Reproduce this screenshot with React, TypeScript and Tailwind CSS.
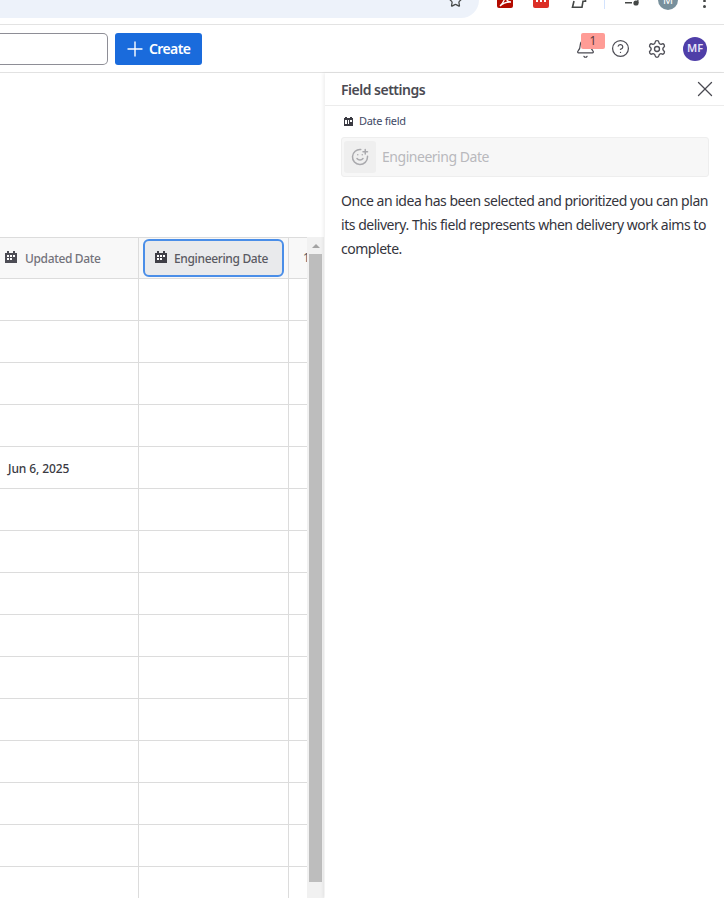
import React from 'react';
import { Bell, CircleHelp, Plus, Settings, SmilePlus, Star, X } from 'lucide-react';

const font = 'font-["Noto_Sans","Open_Sans",sans-serif]';

// solid calendar glyph used for date fields
function DateIcon({ className }: { className?: string }) {
  return (
    <svg viewBox="0 0 14 14" className={className} fill="currentColor" shapeRendering="crispEdges">
      <path d="M1 3h2V1h2v2h4V1h2v2h2v10H1V3z" />
      <rect x="3" y="5" width="2" height="2" fill="#fff" />
      <rect x="6" y="5" width="2" height="2" fill="#fff" />
      <rect x="9" y="5" width="2" height="2" fill="#fff" />
      <rect x="3" y="8" width="2" height="2" fill="#fff" />
      <rect x="6" y="8" width="2" height="2" fill="#fff" />
    </svg>
  );
}

function BrowserStrip() {
  return (
    <div className="flex h-[25px] shrink-0 items-start overflow-hidden border-b border-[#e3e3e3] bg-white">
      <div className="flex h-[18px] w-[479px] shrink-0 justify-end rounded-br-[18px] bg-[#edf2fa] pr-[16px]">
        <Star className="-mt-[7px] h-[15px] w-[15px] text-[#444746]" strokeWidth={2} />
      </div>
      <svg viewBox="0 0 16 16" className="-mt-[8px] ml-[18px] h-4 w-4 shrink-0">
        <rect width="16" height="16" rx="2" fill="#b30b00" />
        <path d="M3 14c3-3 5-7 5-10 1 4 3 6 6 6-4 0-8 1-11 4z" fill="none" stroke="#fff" strokeWidth="1.3" />
      </svg>
      <svg viewBox="0 0 16 16" className="-mt-[8px] ml-[20px] h-4 w-4 shrink-0">
        <rect width="16" height="16" rx="2" fill="#dc2f27" />
        <path d="M3 5h2v5H3zM7 5h2v5H7zM11 5h2v5h-2z" fill="#fff" />
      </svg>
      <svg viewBox="0 0 16 16" className="-mt-[8px] ml-[22px] h-4 w-4 shrink-0" fill="none" stroke="#444746" strokeWidth="1.6">
        <path d="M3 9 1.5 15.2h9.5l1-6h2.5V4" />
      </svg>
      <div className="ml-[17px] h-[9px] w-[1px] shrink-0 bg-[#d3e3fd]" />
      <svg viewBox="0 0 14 8" className="ml-[20px] h-[8px] w-[14px] shrink-0" fill="#444746">
        <rect x="0" y="2" width="7" height="1.5" />
        <circle cx="11" cy="3" r="2.6" />
        <rect x="12.2" y="0" width="1.3" height="3" />
      </svg>
      <div className="-mt-[10px] ml-[19px] flex h-5 w-5 shrink-0 items-center justify-center rounded-full bg-[#78909c] text-[11px] text-white">
        M
      </div>
      <div className="ml-[25px] flex shrink-0 flex-col gap-[3px] pt-0">
        <div className="h-[2px] w-[2.5px] rounded-full bg-[#444746]" />
        <div className="h-[2.5px] w-[2.5px] rounded-full bg-[#444746]" />
      </div>
    </div>
  );
}

function Toolbar() {
  return (
    <div className="flex h-[48px] shrink-0 items-center border-b border-[#e2e2e2] bg-white">
      <div className="h-[32px] w-[108px] shrink-0 rounded-r-[5px] border border-l-0 border-[#8e8e96]" />
      <button className="ml-[7px] flex h-[32px] w-[87px] shrink-0 items-center rounded-[3px] bg-[#1a6bdc] pl-[8px] text-[14px] font-semibold tracking-[-0.6px] text-white">
        <Plus className="h-[24px] w-[24px]" strokeWidth={1.4} />
        <span className="ml-[2px]">Create</span>
      </button>
      <div className="relative ml-[375px] flex h-[24px] w-[16px] shrink-0 items-center justify-center">
        <Bell className="h-[21px] w-[21px] shrink-0 text-[#4a4a52]" strokeWidth={1.4} />
        <div className="absolute -top-[4px] left-[4px] flex h-[16px] w-[24px] items-center justify-center rounded-[2px] bg-[#ff9c96] text-[12px] text-[#5a3a3a]">
          1
        </div>
      </div>
      <CircleHelp className="ml-[18px] h-[19px] w-[19px] shrink-0 text-[#4f4f57]" strokeWidth={1.6} />
      <Settings className="ml-[17px] h-[20px] w-[20px] shrink-0 text-[#4f4f57]" strokeWidth={1.6} />
      <div className="ml-[16px] flex h-[24px] w-[24px] shrink-0 items-center justify-center rounded-full bg-[#4f3ea8] text-[11px] font-semibold text-[#e6e2f7]">
        MF
      </div>
    </div>
  );
}

const rows = Array.from({ length: 15 }, (_, i) => (i === 4 ? 'Jun 6, 2025' : ''));

function Table() {
  return (
    <div className="flex h-[661px] flex-col">
      <div className="flex h-[42px] shrink-0 items-center border-y border-[#dcdcdc] bg-[#f8f8f8] text-[12px] font-medium tracking-[-0.35px]">
        <div className="flex h-full w-[139px] shrink-0 items-center border-r border-[#dcdcdc] pl-[4px] text-[#73737b]">
          <DateIcon className="h-[14px] w-[14px] shrink-0 -translate-y-[1px] text-[#4d4d55]" />
          <span className="ml-[7px] pt-[2px]">Updated Date</span>
        </div>
        <div className="flex h-full w-[150px] shrink-0 items-center border-r border-[#dcdcdc] px-[4px]">
          <div className="flex h-[38px] w-full items-center rounded-[6px] border-2 border-[#4a8ee8] bg-[#e9eaec] pl-[9px] text-[#5a5a62]">
            <DateIcon className="h-[14px] w-[14px] shrink-0 -translate-y-[1px] text-[#3f3f47]" />
            <span className="ml-[6px] pt-[2px]">Engineering Date</span>
          </div>
        </div>
        <div className="w-[18px] shrink-0 overflow-hidden pl-[14px] font-normal text-[#55555d]">1</div>
      </div>
      {rows.map((value, i) => (
        <div key={i} className="flex h-[42px] shrink-0 border-b border-[#dcdcdc] text-[12px] font-medium tracking-[-0.1px] text-[#3a3a42]">
          <div className="flex w-[139px] shrink-0 items-center border-r border-[#dcdcdc] pl-[8px] pt-[2px]">{value}</div>
          <div className="w-[150px] shrink-0 border-r border-[#dcdcdc]" />
          <div className="w-[18px] shrink-0" />
        </div>
      ))}
    </div>
  );
}

function Scrollbar() {
  return (
    <div className="flex h-[661px] w-[17px] shrink-0 flex-col items-center bg-[#f1f1f1]">
      <div className="flex h-[17px] shrink-0 items-center justify-center">
        <div className="h-0 w-0 border-x-[4px] border-b-[4px] border-x-transparent border-b-[#a3a3a3]" />
      </div>
      <div className="h-[628px] w-[13px] shrink-0 bg-[#bdbdbd]" />
    </div>
  );
}

function FieldPanel() {
  return (
    <div className="flex min-w-0 flex-1 flex-col bg-white shadow-[-2px_0_3px_rgba(0,0,0,0.06)]">
      <div className="flex h-[33px] shrink-0 items-center justify-between border-b border-[#ececec] pl-[16px] pr-[6px]">
        <span className="text-[14px] font-semibold tracking-[-0.5px] text-[#4a4a52]">Field settings</span>
        <X className="h-[26px] w-[26px] text-[#4a4a52]" strokeWidth={1.2} />
      </div>
      <div className="flex flex-col pl-[16px] pr-[15px] pt-[7px]">
        <div className="flex h-[16px] items-center text-[11px] tracking-[-0.3px] text-[#3f4a66]">
          <DateIcon className="ml-[2px] h-[11px] w-[11px] text-[#3a3a42]" />
          <span className="ml-[5px]">Date field</span>
        </div>
        <div className="mt-[8px] flex h-[40px] items-center rounded-[3px] border border-[#eeeeee] bg-[#f7f7f7] pl-[2px]">
          <div className="flex h-[32px] w-[32px] shrink-0 items-center justify-center rounded-[3px] bg-[#efefef]">
            <SmilePlus className="h-[18px] w-[18px] text-[#a9a9ad]" strokeWidth={2} />
          </div>
          <span className="ml-[6px] pb-[2px] text-[14px] tracking-[-0.47px] text-[#b9b9bd]">Engineering Date</span>
        </div>
        <p className="mt-[12px] text-[14px] leading-[24px] tracking-[-0.47px] text-[#35353d]">
          Once an idea has been selected and prioritized you can plan its delivery. This field represents when delivery work aims to complete.
        </p>
      </div>
    </div>
  );
}

export default function App() {
  return (
    <div className={`flex h-[898px] w-[724px] flex-col overflow-hidden bg-white ${font}`}>
      <BrowserStrip />
      <Toolbar />
      <div className="flex min-h-0 flex-1">
        <div className="w-[325px] shrink-0 pt-[164px]">
          <div className="flex overflow-hidden">
            <div className="w-[307px] shrink-0 overflow-hidden">
              <Table />
            </div>
            <Scrollbar />
          </div>
        </div>
        <FieldPanel />
      </div>
    </div>
  );
}
